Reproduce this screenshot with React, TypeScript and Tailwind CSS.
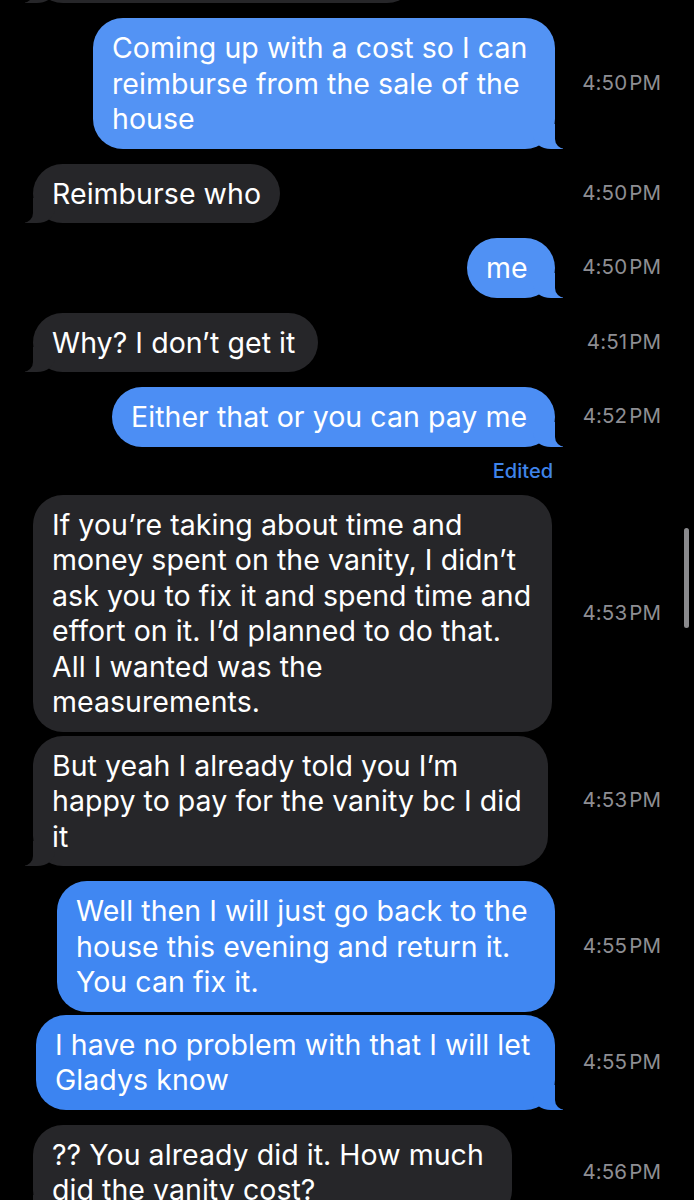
import React from 'react';

type Msg = {
  from: 'me' | 'them';
  lines: string[];
  time: string;
  width: number;
  color?: string;
  tail?: boolean;
  gap: number;
};

const GRAY = '#262629';

const messages: Msg[] = [
  { from: 'me', lines: ['Coming up with a cost so I can', 'reimburse from the sale of the', 'house'], time: '4:50', width: 462, color: '#5393f4', tail: true, gap: 15 },
  { from: 'them', lines: ['Reimburse who'], time: '4:50', width: 247, tail: true, gap: 15 },
  { from: 'me', lines: ['me'], time: '4:50', width: 88, color: '#5091f4', tail: true, gap: 15 },
  { from: 'them', lines: ['Why? I don’t get it'], time: '4:51', width: 285, tail: true, gap: 15 },
  { from: 'me', lines: ['Either that or you can pay me'], time: '4:52', width: 443, color: '#4c8ef4', tail: true, gap: 15 },
];

const messages2: Msg[] = [
  {
    from: 'them',
    lines: [
      'If you’re taking about time and',
      'money spent on the vanity, I didn’t',
      'ask you to fix it and spend time and',
      'effort on it. I’d planned to do that.',
      'All I wanted was the',
      'measurements.',
    ],
    time: '4:53',
    width: 519,
    tail: false,
    gap: 0,
  },
  { from: 'them', lines: ['But yeah I already told you I’m', 'happy to pay for the vanity bc I did', 'it'], time: '4:53', width: 515, tail: true, gap: 4 },
  { from: 'me', lines: ['Well then I will just go back to the', 'house this evening and return it.', 'You can fix it.'], time: '4:55', width: 498, color: '#4087f2', tail: false, gap: 15 },
  { from: 'me', lines: ['I have no problem with that I will let', 'Gladys know'], time: '4:55', width: 519, color: '#3c84f1', tail: true, gap: 3 },
  { from: 'them', lines: ['?? You already did it. How much', 'did the vanity cost?'], time: '4:56', width: 479, tail: true, gap: 15 },
];

function Tail({ side, color }: { side: 'me' | 'them'; color: string }) {
  if (side === 'me') {
    return (
      <>
        <span className="absolute bottom-0 right-[-8px] h-[25px] w-[30px] rounded-bl-[18px_14px]" style={{ backgroundColor: color }} />
        <span className="absolute bottom-0 right-[-26px] h-[25px] w-[26px] rounded-bl-[10px] bg-black" />
      </>
    );
  }
  return (
    <>
      <span className="absolute bottom-0 left-[-8px] h-[25px] w-[30px] rounded-br-[18px_14px]" style={{ backgroundColor: color }} />
      <span className="absolute bottom-0 left-[-26px] h-[25px] w-[26px] rounded-br-[10px] bg-black" />
    </>
  );
}

function Bubble({ m }: { m: Msg }) {
  const bg = m.from === 'me' ? m.color ?? '#4a8ef4' : GRAY;
  return (
    <div
      className="relative rounded-[30px] py-3 pl-[19px] text-[28.5px] leading-[35.5px] tracking-[0.05px] text-white"
      style={{ width: m.width, backgroundColor: bg }}
    >
      {m.tail && <Tail side={m.from} color={bg} />}
      <div className="relative">
        {m.lines.map((l, i) => (
          <div key={i} className="whitespace-nowrap">
            {l}
          </div>
        ))}
      </div>
    </div>
  );
}

function Row({ m }: { m: Msg }) {
  return (
    <div className="flex items-center" style={{ marginTop: m.gap }}>
      <div className={`flex flex-1 ${m.from === 'me' ? 'justify-end' : 'justify-start'}`}>
        <Bubble m={m} />
      </div>
      <div className="w-[106px] text-right text-[20.5px] tracking-[0.1px] text-[#8e8e93]">
        {m.time}
        <span className="ml-[2px]">PM</span>
      </div>
    </div>
  );
}

export default function App() {
  return (
    <div
      className="relative h-[1200px] w-full overflow-hidden bg-black px-[33px] antialiased"
      style={{ fontFamily: 'Inter, "Noto Sans", sans-serif' }}
    >
      {/* previous message, only its bottom edge shows */}
      <div className="-mt-[57px] flex">
        <div className="relative h-[60px] w-[384px] rounded-[30px] bg-[#262629]">
          <Tail side="them" color={GRAY} />
        </div>
      </div>

      {messages.map((m, i) => (
        <Row key={i} m={m} />
      ))}

      <div className="mb-[12px] mt-[12px] flex">
        <div className="flex flex-1 justify-end pr-[2px]">
          <span className="text-[20px] leading-[24px] font-medium text-[#3f84ea]">Edited</span>
        </div>
        <div className="w-[106px]" />
      </div>

      {messages2.map((m, i) => (
        <Row key={i} m={m} />
      ))}

      {/* scroll indicator */}
      <div className="absolute right-[5px] top-[528px] h-[100px] w-[5px] rounded-full bg-[#8a8a8d]" />
    </div>
  );
}
